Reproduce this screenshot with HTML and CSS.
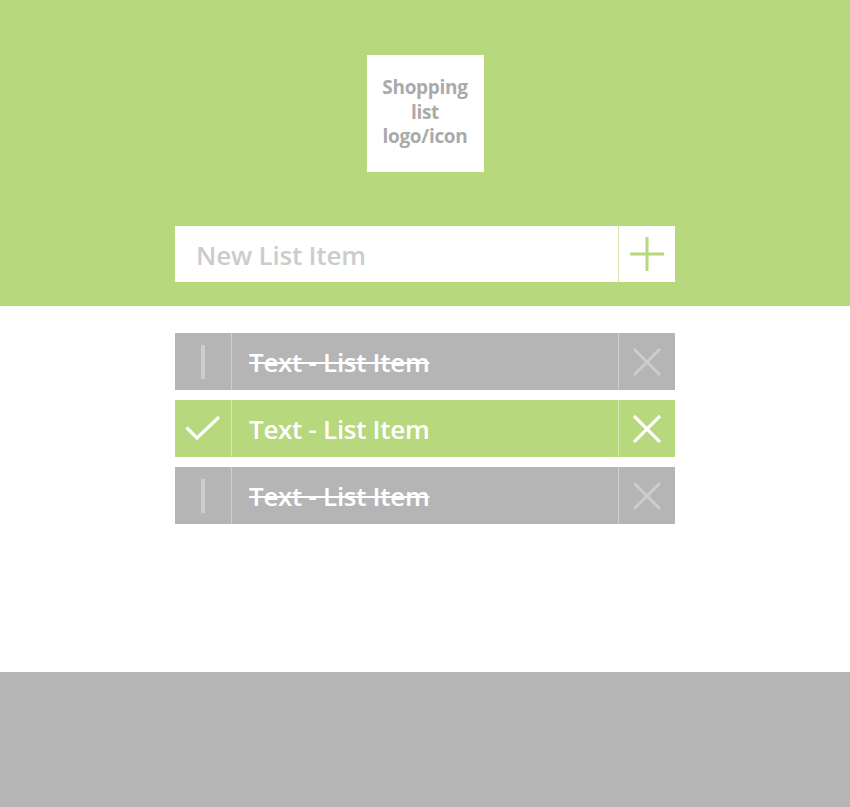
FILE: index.html
```html
<!DOCTYPE html>
<html>
<head>
<meta charset="utf-8">
<link rel="stylesheet" href="styles.css">
</head>
<body>
<div class="page">
  <header class="header">
    <div class="logo">Shopping<br>list<br>logo/icon</div>
    <div class="new-item">
      <div class="new-input">New List Item</div>
      <div class="add-btn">
        <svg width="34" height="34" viewBox="0 0 34 34"><path d="M17 0V34M0 17H34" stroke="#b8d87e" stroke-width="3"/></svg>
      </div>
    </div>
  </header>
  <main class="list">
    <div class="row done">
      <div class="cell-left"><svg width="4" height="34" viewBox="0 0 4 34"><rect x="0" y="0" width="4" height="34" fill="#cdcdcd"/></svg></div>
      <div class="cell-text">Text - List Item</div>
      <div class="cell-right"><svg width="28" height="28" viewBox="0 0 28 28"><path d="M1 1L27 27M27 1L1 27" stroke="#cdcdcd" stroke-width="3"/></svg></div>
    </div>
    <div class="row active">
      <div class="cell-left"><svg width="36" height="26" viewBox="0 0 36 26"><path d="M1.5 11.5L12 22L34 1" fill="none" stroke="#fff" stroke-width="3.2"/></svg></div>
      <div class="cell-text">Text - List Item</div>
      <div class="cell-right"><svg width="28" height="28" viewBox="0 0 28 28"><path d="M1 1L27 27M27 1L1 27" stroke="#fff" stroke-width="3.2"/></svg></div>
    </div>
    <div class="row done">
      <div class="cell-left"><svg width="4" height="34" viewBox="0 0 4 34"><rect x="0" y="0" width="4" height="34" fill="#cdcdcd"/></svg></div>
      <div class="cell-text">Text - List Item</div>
      <div class="cell-right"><svg width="28" height="28" viewBox="0 0 28 28"><path d="M1 1L27 27M27 1L1 27" stroke="#cdcdcd" stroke-width="3"/></svg></div>
    </div>
  </main>
  <footer class="footer"></footer>
</div>
</body>
</html>
```
FILE: styles.css
```css
html, body {
  margin: 0;
  padding: 0;
  background: #ffffff;
}
.page {
  display: flex;
  flex-direction: column;
  height: 807px;
  font-family: "Open Sans", "Noto Sans", sans-serif;
}
.header {
  background: #b8d87e;
  height: 306px;
  box-sizing: border-box;
  padding-top: 55px;
  display: flex;
  flex-direction: column;
  align-items: center;
}
.logo {
  width: 117px;
  height: 117px;
  background: #ffffff;
  color: #aaaaaa;
  font-weight: 700;
  font-size: 19px;
  line-height: 24.5px;
  text-align: center;
  display: flex;
  align-items: center;
  justify-content: center;
  letter-spacing: -0.3px;
  padding-bottom: 3px;
  box-sizing: border-box;
}
.new-item {
  margin-top: 54px;
  width: 500px;
  height: 56px;
  background: #ffffff;
  display: flex;
}
.new-input {
  flex: 1;
  display: flex;
  align-items: center;
  padding-left: 21px;
  padding-top: 2px;
  color: #cccccc;
  font-weight: 600;
  font-size: 26px;
  letter-spacing: -0.2px;
  border-right: 1px solid #d8e9b8;
}
.add-btn {
  width: 56px;
  display: flex;
  align-items: center;
  justify-content: center;
}
.list {
  flex: 1;
  padding-top: 27px;
  display: flex;
  flex-direction: column;
  align-items: center;
  gap: 10px;
}
.row {
  width: 500px;
  height: 57px;
  display: flex;
}
.row.done { background: #b5b5b5; }
.row.active { background: #b8d87e; }
.cell-left {
  width: 56px;
  display: flex;
  align-items: center;
  justify-content: center;
  border-right: 1px solid #cfcfcf;
}
.row.active .cell-left { border-right-color: #d3e8ac; }
.cell-text {
  flex: 1;
  display: flex;
  align-items: center;
  padding-left: 17px;
  color: #ffffff;
  font-size: 26px;
  font-weight: 600;
  letter-spacing: -0.3px;
  border-right: 1px solid #cfcfcf;
}
.row.done .cell-text { text-decoration: line-through; text-decoration-thickness: 2px; }
.row.active .cell-text { border-right-color: #d3e8ac; }
.cell-right {
  width: 56px;
  display: flex;
  align-items: center;
  justify-content: center;
}
.footer {
  height: 135px;
  background: #b5b5b5;
}
```
